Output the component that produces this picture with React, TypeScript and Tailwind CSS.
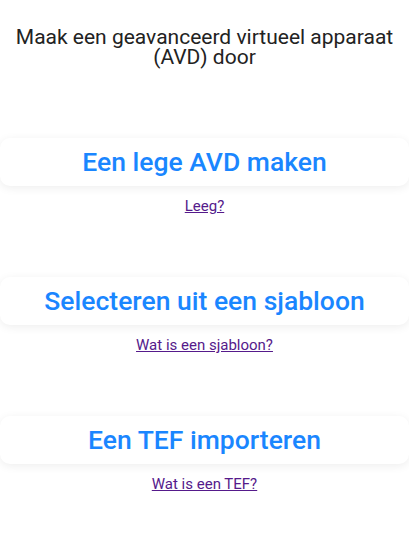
const options = [
  { label: 'Een lege AVD maken', help: 'Leeg?' },
  { label: 'Selecteren uit een sjabloon', help: 'Wat is een sjabloon?' },
  { label: 'Een TEF importeren', help: 'Wat is een TEF?' },
];

export default function App() {
  return (
    <div className="min-h-[542px] bg-white font-['Roboto',sans-serif]">
      <h1 className="px-2 pt-[27px] text-center text-[21px] leading-[20px] font-normal text-[#222]">
        Maak een geavanceerd virtueel apparaat (AVD) door
      </h1>
      <div className="mt-[71px] flex flex-col gap-[62px]">
        {options.map((o) => (
          <div key={o.label} className="flex flex-col items-center">
            <button className="h-12 w-full rounded-[10px] bg-white text-[26.5px] leading-[48px] font-medium text-[#1a86ff] shadow-[0_2px_10px_rgba(0,0,0,0.07)]">
              {o.label}
            </button>
            <a href="#" className="mt-[11px] text-[15px] leading-[18px] text-[#551a8b] underline">
              {o.help}
            </a>
          </div>
        ))}
      </div>
    </div>
  );
}
